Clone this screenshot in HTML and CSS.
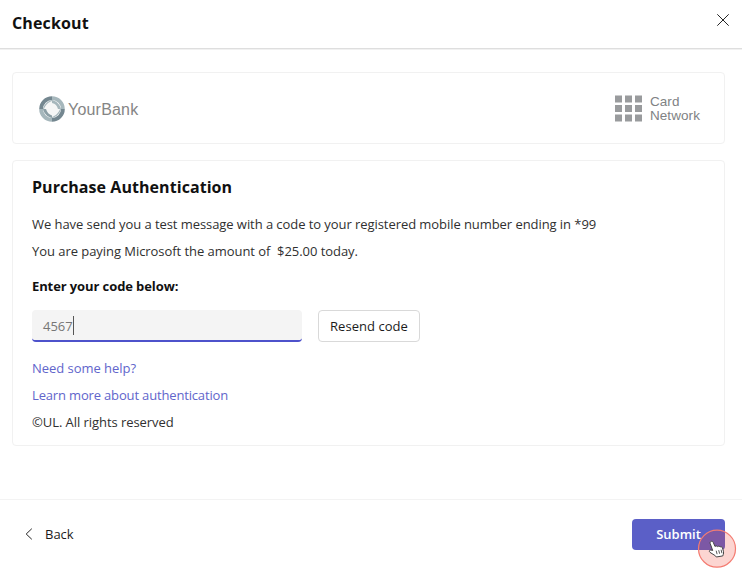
FILE: index.html
```html
<!DOCTYPE html>
<html lang="en">
<head>
<meta charset="utf-8">
<title>Checkout</title>
<link rel="stylesheet" href="styles.css">
</head>
<body>
<div class="dialog">
  <header class="header">
    <h1 class="title">Checkout</h1>
    <button class="close" aria-label="Close">
      <svg width="14" height="14" viewBox="0 0 14 14"><path d="M1.300 1.300 12.700 12.700M12.700 1.300 1.300 12.700" fill="none" stroke="#242424" stroke-width="1"/></svg>
    </button>
  </header>
  <main class="content">
    <section class="card brands">
      <div class="bank">
        <svg class="ring" width="26" height="26" viewBox="0 0 26 26" fill="none">
          <circle cx="13" cy="13" r="8.500" fill="#f5f6f6"/>
          <g stroke-width="3.800">
            <path d="M2.100 13A10.900 10.900 0 0 1 13 2.100" stroke="#748790"/>
            <path d="M13 2.100A10.900 10.900 0 0 1 23.900 13" stroke="#a6b7bc"/>
            <path d="M23.900 13A10.900 10.900 0 0 1 13 23.900" stroke="#748790"/>
            <path d="M13 23.900A10.900 10.900 0 0 1 2.100 13" stroke="#a6b7bc"/>
          </g>
          <path d="M4 13C5 8.500 8.500 5 13 4v1C9.500 6 6 9.500 5 13z" fill="#a6b7bc"/>
          <path d="M13 4c4.500 1 8 4.500 9 9h-3C18 9.500 16.500 7.500 13 7z" fill="#a6b7bc"/>
          <path d="M22 13c-1 4.500-4.500 8-9 9v-1c3.500-1 7-4.500 8-8z" fill="#a6b7bc"/>
          <path d="M13 22c-4.500-1-8-4.500-9-9h3c1 3.500 3 5.500 6 6.500z" fill="#8c9fa6"/>
        </svg>
        <span class="bank-name">YourBank</span>
      </div>
      <div class="network">
        <svg width="27" height="27" viewBox="0 0 27 27" fill="#999b9d">
          <path d="M0 .500h7v7H0zM10 .500h7v7h-7zM20 .500h7v7h-7zM0 10h7v7H0zM10 10h7v7h-7zM20 10h7v7h-7zM0 19.500h7v7H0zM10 19.500h7v7h-7zM20 19.500h7v7h-7z"/>
        </svg>
        <span class="network-name">Card<br>Network</span>
      </div>
    </section>
    <section class="card auth">
      <h2 class="heading">Purchase Authentication</h2>
      <p class="line message">We have send you a test message with a code to your registered mobile number ending in *99</p>
      <p class="line amount">You are paying Microsoft the amount of &nbsp;$25.00 today.</p>
      <h3 class="label">Enter your code below:</h3>
      <div class="entry">
        <div class="field"><span>4567</span><i class="caret"></i></div>
        <button class="resend">Resend code</button>
      </div>
      <a class="line link">Need some help?</a>
      <a class="line link learn">Learn more about authentication</a>
      <p class="line rights">©UL. All rights reserved</p>
    </section>
  </main>
  <footer class="footer">
    <button class="back">
      <svg width="8" height="12" viewBox="0 0 8 12"><path d="M6.800.700 1.200 6 6.800 11.300" fill="none" stroke="#242424" stroke-width="1"/></svg>
      <span>Back</span>
    </button>
    <button class="submit">Submit</button>
  </footer>
  <svg class="pointer" width="40" height="40" viewBox="0 0 40 40">
    <circle cx="20" cy="19.700" r="18.500" fill="#f0402e" fill-opacity=".22" stroke="#f47c72" stroke-width="1.200"/>
    <g transform="translate(-.3 -1.300)">
      <path d="M14.200 13.800c1-.6 2 0 2.400 1l1.700 4c.8-.8 2-.7 2.500.1.900-.7 2-.5 2.500.4 1-.6 2.200-.1 2.500 1l.9 3.200c.3 1.200.2 2.400-.2 3.500l-.4 1.200-6.500 1.100-1-1.300-5.300-3.300c-1.100-.8-.7-2.500.8-2.400l1.900.5-2.500-7c-.3-.8 0-1.600.7-2z" fill="#fff" stroke="#444" stroke-width="1"/>
      <path d="m19.500 23 .9 3.500M22 22.500l.9 3.500M24.400 22l.8 3.500" fill="none" stroke="#444" stroke-width=".9"/>
    </g>
  </svg>
</div>
</body>
</html>
```
FILE: styles.css
```css
* { box-sizing: border-box; }
body {
  margin: 0;
  background: #fff;
  color: #303030;
  font-family: "Open Sans", sans-serif;
  font-size: 13px;
}
h1, h2, h3, p { margin: 0; }
button {
  padding: 0;
  border: 0;
  background: none;
  color: inherit;
  font: inherit;
}
svg { display: block; flex: none; }
.dialog {
  position: relative;
  display: flex;
  flex-direction: column;
  width: 742px;
  height: 572px;
  overflow: hidden;
}
.header {
  display: flex;
  flex: none;
  justify-content: space-between;
  height: 49px;
  padding: 0 12px 0 12px;
  border-bottom: 1px solid #dedede;
  box-shadow: 0 1px 0 #f1f1f1;
}
.title {
  padding-top: 11px;
  color: #111;
  font-size: 16px;
  line-height: 24px;
  letter-spacing: .15px;
}
.close { height: 14px; margin-top: 13px; }
.content {
  display: flex;
  flex: 1;
  flex-direction: column;
  gap: 16px;
  padding: 23px 17px 0 12px;
}
.card {
  border: 1px solid #f1f1f1;
  border-radius: 4px;
}
.brands {
  display: flex;
  align-items: center;
  justify-content: space-between;
  height: 72px;
  padding: 0 24px 0 26px;
}
.bank, .network { display: flex; align-items: center; }
.bank { gap: 3px; padding-top: 2px; }
.bank-name {
  padding-top: 2px;
  color: #858585;
  font: 16px/24px "Liberation Sans", sans-serif;
  letter-spacing: .2px;
}
.network { gap: 8px; }
.network-name {
  padding-top: 1px;
  color: #808284;
  font: 13.500px/14px "Liberation Sans", sans-serif;
  letter-spacing: .08px;
}
.auth {
  display: flex;
  flex-direction: column;
  align-items: flex-start;
  height: 286px;
  padding: 14px 19px 0;
}
.heading {
  color: #111;
  font-size: 16px;
  line-height: 24px;
  letter-spacing: .06px;
}
.line { line-height: 27px; }
.message { margin-top: 12px; letter-spacing: -.065px; }
.amount { letter-spacing: -.05px; }
.label {
  margin-top: 9px;
  color: #111;
  font-size: 13px;
  line-height: 24px;
  letter-spacing: -.1px;
}
.entry {
  display: flex;
  gap: 16px;
  height: 32px;
  margin: 12px 0 13px;
}
.field {
  display: flex;
  align-items: center;
  width: 270px;
  height: 32px;
  padding: 1px 0 0 11px;
  border-bottom: 2px solid #4e52cb;
  border-radius: 4px;
  background: #f4f4f4;
  color: #767676;
}
.caret { width: 1px; height: 19px; background: #555; }
.resend {
  width: 102px;
  border: 1px solid #d9d9d9;
  border-radius: 4px;
  color: #1b1b1b;
  letter-spacing: .05px;
}
.link { color: #6165cb; }
.link:not(.learn) { letter-spacing: -.04px; }
.learn { letter-spacing: -.16px; }
.rights { letter-spacing: -.06px; }
.footer {
  display: flex;
  flex: none;
  align-items: flex-start;
  justify-content: space-between;
  height: 73px;
  padding: 19px 17px 0 25px;
  border-top: 1px solid #f3f3f3;
}
.back {
  display: flex;
  align-items: center;
  gap: 12px;
  height: 30px;
  color: #1b1b1b;
}
.submit {
  width: 93px;
  height: 31px;
  padding-bottom: 1px;
  border-radius: 4px;
  background: #5b5fc7;
  color: #fff;
  font-weight: 600;
}
.pointer {
  position: absolute;
  left: 697px;
  top: 529px;
}
```
